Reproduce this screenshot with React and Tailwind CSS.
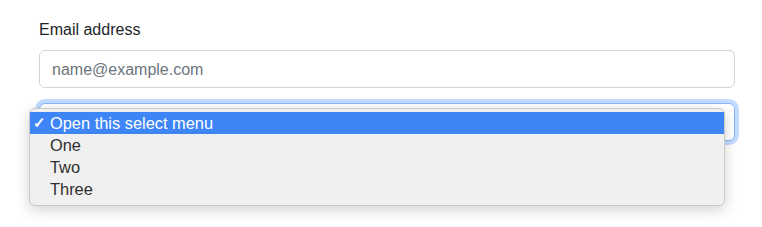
import React from 'react';

const options = ['Open this select menu', 'One', 'Two', 'Three'];

const App = () => {
  return (
    <div className="w-[762px] h-[227px] bg-white overflow-hidden" style={{ fontFamily: '"Liberation Sans", Arial, sans-serif' }}>
      <div className="ml-[39px] w-[696px] pt-[18px]">
        {/* email field */}
        <div className="mb-[15px]">
          <label className="block text-[16px] leading-[24px] text-[#212529] mb-[8px]">Email address</label>
          <input
            type="email"
            placeholder="name@example.com"
            className="block w-full h-[38px] px-[12px] pt-[1px] text-[16px] text-[#212529] placeholder:text-[#6c757d] bg-white border border-[#ced4da] rounded-[6px] outline-none"
          />
        </div>

        {/* select with open menu */}
        <div className="relative">
          <div className="h-[38px] w-full bg-white border border-[#86b7fe] rounded-[6px] shadow-[0_0_0_4px_rgba(13,110,253,0.25)]"></div>
          <div className="absolute left-[-10px] top-[5px] w-[696px] bg-[#f0f0f0] border border-[#c9c9c9] rounded-[6px] pt-[3px] pb-[5px] shadow-[0_4px_14px_rgba(0,0,0,0.18)]">
            {options.map((opt, i) => (
              <div
                key={opt}
                className={`flex items-center h-[22px] text-[16.4px] leading-[22px] ${i === 0 ? 'bg-[#3e85f7] text-white' : 'text-[#2e2e2e]'}`}
              >
                <span className="w-[20px] pl-[3px] text-[15px] font-bold">{i === 0 ? '✓' : ''}</span>
                <span>{opt}</span>
              </div>
            ))}
          </div>
        </div>
      </div>
    </div>
  );
};

export default App;
